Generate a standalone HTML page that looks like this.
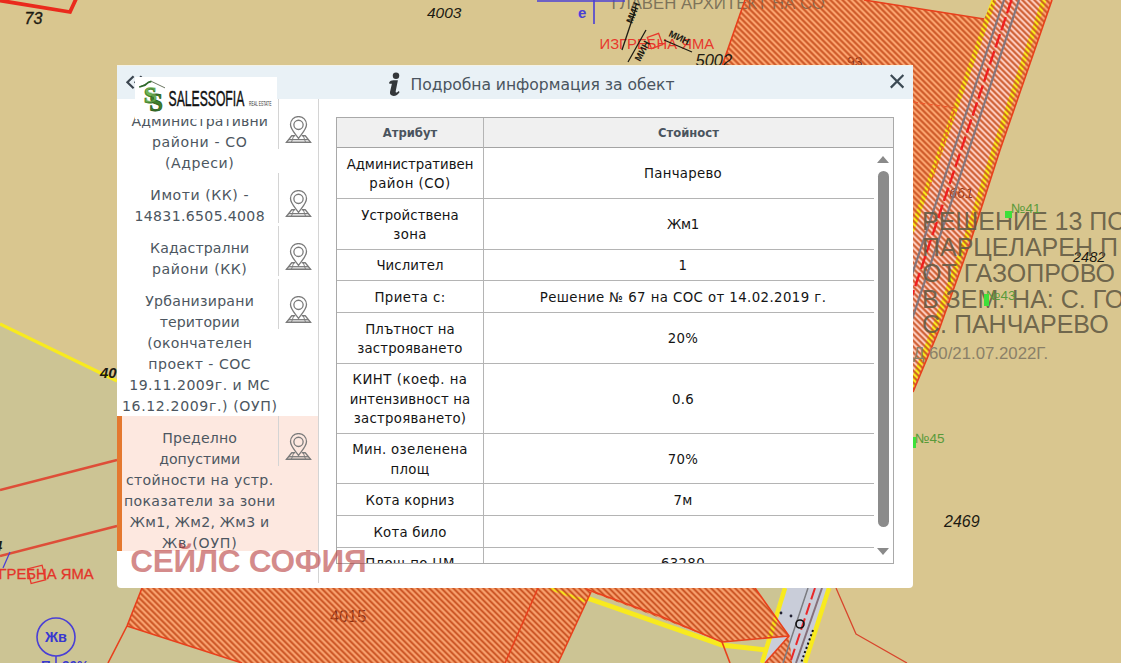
<!DOCTYPE html>
<html lang="bg">
<head>
<meta charset="utf-8">
<title>Подробна информация за обект</title>
<style>
html,body{margin:0;padding:0;}
body{width:1121px;height:663px;overflow:hidden;position:relative;background:#d9c68f;font-family:"DejaVu Sans","Liberation Sans",sans-serif;}
#map{position:absolute;left:0;top:0;width:1121px;height:663px;display:block;}
#dlg{position:absolute;left:117px;top:65px;width:796px;height:523px;background:#fff;border-radius:0 0 4px 4px;overflow:hidden;}
#hdr{position:absolute;left:0;top:0;width:796px;height:34px;background:#e9f1f6;box-sizing:border-box;border-top:1px solid #f4f2e6;}
#title{position:absolute;left:293.5px;top:9px;font-size:15.6px;line-height:22px;color:#4a545e;white-space:nowrap;letter-spacing:-0.05px;}
#info{position:absolute;left:268px;top:4px;}
#back{position:absolute;left:7px;top:9px;}
#close{position:absolute;left:772px;top:8.5px;}
#side{position:absolute;left:0;top:34px;width:201px;height:451.5px;overflow:hidden;}
#sideb{position:absolute;left:201px;top:34px;width:1px;height:484px;background:#d4d4d4;}
.item{position:absolute;left:0;width:201px;box-sizing:border-box;border-left:5px solid transparent;}
.item.active{background:#fde8e0;border-left-color:#e4782f;}
.itxt{position:absolute;left:0;top:12px;width:155.4px;text-align:center;font-size:14.1px;line-height:21px;color:#4c5660;white-space:nowrap;}
.icell{position:absolute;left:156px;top:0;width:40px;height:50px;border-left:1px solid #d4d4d4;}
.pin{position:absolute;left:5.7px;top:17.4px;width:27px;height:27px;}
#logo{position:absolute;left:18px;top:12px;width:142px;height:41.6px;background:#fff;}
#logotxt{position:absolute;left:33.5px;top:10.5px;font-family:"Liberation Sans",sans-serif;font-size:22px;line-height:22px;color:#111;transform-origin:0 0;transform:scaleX(0.535);white-space:nowrap;letter-spacing:0.3px;}
#logosub{position:absolute;left:113.5px;top:22.5px;font-family:"Liberation Sans",sans-serif;font-size:7px;line-height:8px;color:#333;transform-origin:0 0;transform:scaleX(0.62);white-space:nowrap;}
#tbl{position:absolute;left:219px;top:52px;width:556px;height:445px;border:1px solid #a9a9a9;overflow:hidden;background:#fff;}
#th{position:absolute;left:0;top:0;width:556px;height:29px;background:#f0f0f0;border-bottom:1px solid #a4a4a4;}
#th div{position:absolute;top:0;height:29px;line-height:31px;text-align:center;font-weight:bold;font-size:11.6px;color:#4a545e;}
.tr{position:absolute;left:0;width:538px;}
.ta{position:absolute;left:0;top:0;bottom:0;width:146px;display:flex;align-items:center;justify-content:center;text-align:center;}
.tv{position:absolute;left:147px;top:0;bottom:0;width:398px;display:flex;align-items:center;justify-content:center;text-align:center;}
.tr span{font-size:13.3px;line-height:19.6px;color:#141414;white-space:nowrap;position:relative;top:1.1px;}
.tr i{font-style:normal;}
.hl{position:absolute;left:0;width:537px;height:1px;background:#b4b4b4;}
#vl{position:absolute;left:146px;top:0;width:1px;height:445px;background:#b4b4b4;}
#sb{position:absolute;left:538px;top:30px;width:18px;height:415px;background:#fff;}
#thumb{position:absolute;left:3px;top:23px;width:11px;height:356px;border-radius:5.5px;background:#8b8b8b;}
.arr{position:absolute;left:1.6px;width:0;height:0;border-left:6.8px solid transparent;border-right:6.8px solid transparent;}
#wm{position:absolute;left:13.3px;top:478px;font-family:"Liberation Sans",sans-serif;font-weight:bold;font-size:31.6px;line-height:36px;letter-spacing:-0.3px;color:rgba(183,60,60,0.6);white-space:nowrap;}
</style>
</head>
<body>

<svg id="map" width="1121" height="663" viewBox="0 0 1121 663">
<defs>
<linearGradient id="sg" x1="0" y1="0" x2="1" y2="0">
<stop offset="0" stop-color="#c64c1c" stop-opacity="0"/>
<stop offset="0.14" stop-color="#c64c1c" stop-opacity="0"/>
<stop offset="0.36" stop-color="#c64c1c" stop-opacity="0.8"/>
<stop offset="0.5" stop-color="#c64c1c" stop-opacity="0.95"/>
<stop offset="0.64" stop-color="#c64c1c" stop-opacity="0.8"/>
<stop offset="0.86" stop-color="#c64c1c" stop-opacity="0"/>
<stop offset="1" stop-color="#c64c1c" stop-opacity="0"/>
</linearGradient>
<pattern id="stripes" width="4.24" height="4.24" patternUnits="userSpaceOnUse" patternTransform="rotate(-45)">
<rect x="0" y="0" width="4.24" height="4.24" fill="url(#sg)"/>
</pattern>
<clipPath id="zoneA"><polygon points="745,0 864,0 984,19 993,0 1052,0 1000,150 971,240 939,330 913,392 905,415 700,415 722,65"/></clipPath>
<clipPath id="zoneB"><path d="M150,570 L142,588 L127,626 L242,663 L558,663 L591,592 L660,618 L722,642 L789,636 L755,588 L750,570 Z M789,636 L765,663 L792,663 Z"/></clipPath>
</defs>
<rect width="1121" height="663" fill="#d9c68f"/>
<polygon points="0,324 117,381 400,500 783,588 760,663 0,663" fill="#ccc494"/>
<!-- road surfaces -->
<polygon points="783,588 830,588 806,663 760,663" fill="#c9cdd9"/>
<!-- zone fills (orange tint) -->
<g fill="#ff9c68" fill-opacity="0.85">
<polygon points="745,0 864,0 984,19 993,0 1052,0 1000,150 971,240 939,330 913,392 905,415 700,415 722,65"/>
<path d="M150,570 L142,588 L127,626 L242,663 L558,663 L591,592 L660,618 L722,642 L789,636 L755,588 L750,570 Z M789,636 L765,663 L792,663 Z"/>
</g>
<polygon points="994,0 1044,0 994,150 965.5,240 933.5,330 909,392 850,392 905,250" fill="#fcccc0" fill-opacity="0.92"/>
<!-- labels below the hatch -->
<g font-family="Liberation Sans, sans-serif">
<text x="611.5" y="9" font-size="16.8" fill="#6d6450" fill-opacity="0.85">ГЛАВЕН АРХИТЕКТ НА СО</text>
</g>
<!-- yellow lines -->
<g stroke="#f8ea1e" fill="none" stroke-linecap="butt">
<path d="M0,324 L117,381" stroke-width="3.2"/>
<path d="M994,0 L905,250" stroke-width="5"/>
<path d="M1044,0 L994,150 L965.5,240 L933.5,330 L909,392" stroke-width="5"/>
<path d="M587,598 L722,645 L766,650" stroke-width="5"/>
<path d="M785,588 L762,663" stroke-width="4.5"/>
<path d="M829,588 L805,663" stroke-width="4.5"/>
<path d="M549,588 L585,601" stroke-width="3"/>
</g>
<g font-family="Liberation Sans, sans-serif" fill="#74240c" fill-opacity="0.9">
<text x="847" y="67" font-size="14">93</text>
<text x="949" y="197.5" font-size="14.5" font-style="italic">661</text>
<text x="330" y="621.5" font-size="16.3">4015</text>
</g>
<!-- red stripes over zones -->
<rect x="690" y="0" width="370" height="420" fill="url(#stripes)" clip-path="url(#zoneA)"/>
<rect x="120" y="565" width="680" height="98" fill="url(#stripes)" clip-path="url(#zoneB)"/>
<!-- road centre lines -->
<g fill="none">
<path d="M1004,0 L870,400" stroke="#84767c" stroke-width="2.2"/>
<path d="M1019,0 L885,400" stroke="#84767c" stroke-width="2.2"/>
<path d="M1011.5,0 L877,400" stroke="#f02020" stroke-width="2.4" stroke-dasharray="14 4"/>
<path d="M808,588 L783,663" stroke="#7b7b80" stroke-width="1.5"/>
<path d="M822,588 L796,663" stroke="#85707a" stroke-width="2"/>
<path d="M815,588 L790,663" stroke="#e8282a" stroke-width="2" stroke-dasharray="12 4"/>
<path d="M813,630 L801,663" stroke="#111" stroke-width="2" stroke-dasharray="2 2.5"/>
</g>
<!-- red outlines -->
<g stroke="#e8401c" fill="none" stroke-width="1.6" stroke-linejoin="round">
<path d="M745,0 L722,66"/>
<path d="M864,0 L984,19"/>
<path d="M1052,0 L1000,150 L971,240 L939,330 L913,392"/>
<path d="M142,588 L127,626 L108,663"/>
<path d="M127,626 L242,663"/>
<path d="M538,588 L505,663"/>
<path d="M591,592 L558,663"/>
<path d="M586,589 L660,616 L722,642 L789,636 L755,588"/>
<path d="M722,642 L730,663"/>
<path d="M789,636 L765,663"/>
<path d="M836,588 L856,634 L907,663" stroke="#d8452c" stroke-width="1.3"/>
<path d="M913,102 L955,108 L926,198" stroke="#f0582c" stroke-width="1.2" stroke-dasharray="5 2.5"/>
</g>
<!-- plain red lines on the left -->
<g stroke="#de4e38" fill="none" stroke-width="2.4">
<path d="M0,490 L117,460"/>
<path d="M0,556 L117,526"/>
<path d="M0,0.5 L70,12 L76,-1" stroke="#ea2a1c" stroke-width="3.8"/>
</g>
<!-- blue things -->
<g stroke="#4a3fd6" fill="none" stroke-width="1.6">
<path d="M537,1 L625,1"/>
<path d="M594,0 L594,24"/>
<circle cx="56" cy="637" r="19"/>
<path d="M56,656 L56,663"/>
<path d="M10,552 L3,568" stroke-width="1.2"/>
</g>
<!-- labels -->
<g font-family="Liberation Sans, sans-serif">
<text x="24.5" y="24" font-size="16" font-style="italic" fill="#1c1a12" stroke="#1c1a12" stroke-width="0.35">73</text>
<text x="427" y="18" font-size="15.5" font-style="italic" fill="#1c1a12">4003</text>
<text x="695.5" y="65.5" font-size="16.5" font-style="italic" fill="#1c1a12">5002</text>
<text x="100" y="378" font-size="15" font-style="italic" font-weight="bold" fill="#1c1a12">40</text>
<text x="944" y="527" font-size="16" font-style="italic" fill="#1c1a12">2469</text>
<text x="1073" y="262" font-size="14.5" font-style="italic" fill="#1c1a12">2482</text>
<text x="599.5" y="48.5" font-size="14.8" fill="#e8382c">ИЗГРЕБНА ЯМА</text>
<text x="-21" y="578.5" font-size="14.8" fill="#e3342a" stroke="#e3342a" stroke-width="0.3">ИЗГРЕБНА ЯМА</text>
<rect x="-7" y="-7" width="15" height="15" transform="translate(36,574) rotate(-14)" fill="none" stroke="#e8382c" stroke-width="1.3"/>
<rect x="-6" y="-6" width="12" height="12" transform="translate(655,41) rotate(-20)" fill="none" stroke="#e8382c" stroke-width="1.3"/>
<text x="578" y="18" font-size="15" font-weight="bold" fill="#4a3fd6">е</text>
<text x="56" y="642" font-size="14.5" font-weight="bold" fill="#3838d0" text-anchor="middle">Жв</text>
<text x="41" y="669.5" font-size="13.5" font-weight="bold" fill="#3838d0">П</text>
<text x="62" y="669.5" font-size="13.5" font-weight="bold" fill="#3838d0">20%</text>
<text x="-6" y="551" font-size="15" font-style="italic" font-weight="bold" fill="#1c1a12">4</text>
<g fill="#1c1a12" font-size="9.5" font-weight="bold">
<text transform="translate(632,24) rotate(-68)">МИН</text>
<text transform="translate(640,62) rotate(-62)">МИН</text>
<text transform="translate(668,36) rotate(25)">МИН</text>
</g>
<g stroke="#1c1a12" stroke-width="1.3" fill="none">
<path d="M636,8 L622,50"/><path d="M646,30 L628,62"/><path d="M664,40 L692,52"/>
</g>
<g fill="#625a44" fill-opacity="0.9" font-size="25">
<text x="922" y="229.5">РЕШЕНИЕ 13 ПО</text>
<text x="922" y="255.5">ПАРЦЕЛАРЕН П</text>
<text x="922" y="281.5">ОТ ГАЗОПРОВО</text>
<text x="922" y="307.5">В ЗЕМ. НА: С. ГО</text>
<text x="922" y="333">С. ПАНЧАРЕВО</text>
</g>
<text x="913" y="359" font-size="16.8" fill="#8a8068">Д 60/21.07.2022Г.</text>
<g fill="#5a9a3a" font-size="13.5">
<text x="1011" y="213">№41</text>
<text x="986" y="300">№43</text>
<text x="915" y="443">№45</text>
</g>
<rect x="1005" y="211" width="7" height="7" fill="#3ee03a"/>
<rect x="984" y="294" width="5" height="12" fill="#3ee03a"/>
<rect x="913" y="437" width="3" height="11" fill="#3ee03a"/>
<circle cx="800" cy="624" r="4" fill="none" stroke="#111" stroke-width="1.6"/>
<circle cx="781" cy="613" r="1.4" fill="#223"/><circle cx="791" cy="616" r="1.4" fill="#223"/>
</g>
</svg>

<div id="dlg">
<div id="hdr"></div>
<svg id="hicons" style="position:absolute;left:0;top:0" width="796" height="34" viewBox="117 65 796 34">
<g fill="none" stroke="#3c4650" stroke-width="2.2"><path d="M133.6,76.2 L127.4,82.2 L133.6,88.2"/><path d="M141.6,76.2 L135.4,82.2 L141.6,88.2"/></g>
<g fill="#33373a"><circle cx="396" cy="75.8" r="3.25"/>
<path d="M389.1,82.4 C390,81 391.6,80.3 393.4,80.3 L397.9,80.2 L395.7,91.3 C395.5,92.6 396.3,92.9 397.2,92.3 L398.9,91.1 L399.5,92.2 C398,94.4 396,95.9 393.6,95.9 C391,95.9 389.6,94.4 390,92.1 L391.9,83.8 C391,83.5 390.2,83.6 389.6,84 Z"/></g>
<g fill="none" stroke="#3c4a54" stroke-width="2.2"><path d="M890.8,75 L903.4,87.6 M903.4,75 L890.8,87.6"/></g>
</svg>
<div id="title">Подробна информация за обект</div>
<div id="sideb"></div>
<div id="side">
<div class="item" style="top:0px;height:74px"><div class="itxt"><span style="letter-spacing:0.09px">Административни</span><br><span style="letter-spacing:0.62px">райони - СО</span><br><span style="letter-spacing:0.56px">(Адреси)</span></div><div class="icell"><svg class="pin" width="28" height="28" viewBox="0 0 28 28" fill="none" stroke="#7b7b7b" stroke-width="1.35" stroke-linejoin="round">
<path d="M14,0.6 C9.2,0.6 5.7,4.3 5.7,8.9 C5.7,13.8 10.6,18.4 14,23.3 C17.4,18.4 22.3,13.8 22.3,8.9 C22.3,4.3 18.8,0.6 14,0.6 Z"/>
<circle cx="14" cy="9.2" r="4.8"/>
<path d="M10.6,20.5 L7,20.5 L0.8,28.2 L27.2,28.2 L21,20.5 L17.4,20.5"/>
<path d="M3.6,24.6 L24.4,24.6" />
<path d="M1.6,27.3 L26.4,27.3" stroke-width="1.9"/>
<path d="M9,20.6 L6.4,28 M19,20.6 L21.6,28 M14,23.6 L14,24.6" stroke-width="1"/>
</svg></div></div>
<div class="item" style="top:74px;height:53px"><div class="itxt"><span style="letter-spacing:0.54px">Имоти (КК) -</span><br><span style="letter-spacing:0.33px">14831.6505.4008</span></div><div class="icell"><svg class="pin" width="28" height="28" viewBox="0 0 28 28" fill="none" stroke="#7b7b7b" stroke-width="1.35" stroke-linejoin="round">
<path d="M14,0.6 C9.2,0.6 5.7,4.3 5.7,8.9 C5.7,13.8 10.6,18.4 14,23.3 C17.4,18.4 22.3,13.8 22.3,8.9 C22.3,4.3 18.8,0.6 14,0.6 Z"/>
<circle cx="14" cy="9.2" r="4.8"/>
<path d="M10.6,20.5 L7,20.5 L0.8,28.2 L27.2,28.2 L21,20.5 L17.4,20.5"/>
<path d="M3.6,24.6 L24.4,24.6" />
<path d="M1.6,27.3 L26.4,27.3" stroke-width="1.9"/>
<path d="M9,20.6 L6.4,28 M19,20.6 L21.6,28 M14,23.6 L14,24.6" stroke-width="1"/>
</svg></div></div>
<div class="item" style="top:127px;height:53px"><div class="itxt"><span style="letter-spacing:0.11px">Кадастрални</span><br><span style="letter-spacing:0.57px">райони (КК)</span></div><div class="icell"><svg class="pin" width="28" height="28" viewBox="0 0 28 28" fill="none" stroke="#7b7b7b" stroke-width="1.35" stroke-linejoin="round">
<path d="M14,0.6 C9.2,0.6 5.7,4.3 5.7,8.9 C5.7,13.8 10.6,18.4 14,23.3 C17.4,18.4 22.3,13.8 22.3,8.9 C22.3,4.3 18.8,0.6 14,0.6 Z"/>
<circle cx="14" cy="9.2" r="4.8"/>
<path d="M10.6,20.5 L7,20.5 L0.8,28.2 L27.2,28.2 L21,20.5 L17.4,20.5"/>
<path d="M3.6,24.6 L24.4,24.6" />
<path d="M1.6,27.3 L26.4,27.3" stroke-width="1.9"/>
<path d="M9,20.6 L6.4,28 M19,20.6 L21.6,28 M14,23.6 L14,24.6" stroke-width="1"/>
</svg></div></div>
<div class="item" style="top:180px;height:137px"><div class="itxt"><span style="letter-spacing:0.25px">Урбанизирани</span><br><span style="letter-spacing:0.1px">територии</span><br><span style="letter-spacing:0.32px">(окончателен</span><br><span style="letter-spacing:0.49px">проект - СОС</span><br><span style="letter-spacing:0.49px">19.11.2009г. и МС</span><br><span style="letter-spacing:0.62px">16.12.2009г.) (ОУП)</span></div><div class="icell"><svg class="pin" width="28" height="28" viewBox="0 0 28 28" fill="none" stroke="#7b7b7b" stroke-width="1.35" stroke-linejoin="round">
<path d="M14,0.6 C9.2,0.6 5.7,4.3 5.7,8.9 C5.7,13.8 10.6,18.4 14,23.3 C17.4,18.4 22.3,13.8 22.3,8.9 C22.3,4.3 18.8,0.6 14,0.6 Z"/>
<circle cx="14" cy="9.2" r="4.8"/>
<path d="M10.6,20.5 L7,20.5 L0.8,28.2 L27.2,28.2 L21,20.5 L17.4,20.5"/>
<path d="M3.6,24.6 L24.4,24.6" />
<path d="M1.6,27.3 L26.4,27.3" stroke-width="1.9"/>
<path d="M9,20.6 L6.4,28 M19,20.6 L21.6,28 M14,23.6 L14,24.6" stroke-width="1"/>
</svg></div></div>
<div class="item active" style="top:317px;height:135px"><div class="itxt"><span style="letter-spacing:0.16px">Пределно</span><br><span style="letter-spacing:0.02px">допустими</span><br><span style="letter-spacing:0.35px">стойности на устр.</span><br><span style="letter-spacing:0.32px">показатели за зони</span><br><span style="letter-spacing:0.25px">Жм1, Жм2, Жм3 и</span><br><span style="letter-spacing:0.79px">Жв (ОУП)</span></div><div class="icell"><svg class="pin" width="28" height="28" viewBox="0 0 28 28" fill="none" stroke="#7b7b7b" stroke-width="1.35" stroke-linejoin="round">
<path d="M14,0.6 C9.2,0.6 5.7,4.3 5.7,8.9 C5.7,13.8 10.6,18.4 14,23.3 C17.4,18.4 22.3,13.8 22.3,8.9 C22.3,4.3 18.8,0.6 14,0.6 Z"/>
<circle cx="14" cy="9.2" r="4.8"/>
<path d="M10.6,20.5 L7,20.5 L0.8,28.2 L27.2,28.2 L21,20.5 L17.4,20.5"/>
<path d="M3.6,24.6 L24.4,24.6" />
<path d="M1.6,27.3 L26.4,27.3" stroke-width="1.9"/>
<path d="M9,20.6 L6.4,28 M19,20.6 L21.6,28 M14,23.6 L14,24.6" stroke-width="1"/>
</svg></div></div>
</div>
<div id="tbl">
<div id="th"><div style="left:0;width:146px">Атрибут</div><div style="left:147px;width:409px;">Стойност</div></div>
<div style="position:absolute;left:0;top:30px;width:556px;height:415px;overflow:hidden;" id="tbody">
</div>
<div class="tr" style="top:30px;height:50px"><div class="ta"><span><i style="letter-spacing:-0.02px">Административен</i><br><i style="letter-spacing:0.51px">район (СО)</i></span></div><div class="tv"><span><i style="letter-spacing:0.3px">Панчарево</i></span></div></div>
<div class="hl" style="top:80px"></div>
<div class="tr" style="top:81px;height:50px"><div class="ta"><span><i style="letter-spacing:0.11px">Устройствена</i><br><i style="letter-spacing:0.4px">зона</i></span></div><div class="tv"><span><i style="letter-spacing:-0.3px">Жм1</i></span></div></div>
<div class="hl" style="top:131px"></div>
<div class="tr" style="top:132px;height:30px"><div class="ta"><span><i style="letter-spacing:0.06px">Числител</i></span></div><div class="tv"><span><i style="letter-spacing:0.3px">1</i></span></div></div>
<div class="hl" style="top:162px"></div>
<div class="tr" style="top:163px;height:31px"><div class="ta"><span><i style="letter-spacing:0.45px">Приета с:</i></span></div><div class="tv"><span><i style="letter-spacing:0.42px">Решение № 67 на СОС от 14.02.2019 г.</i></span></div></div>
<div class="hl" style="top:194px"></div>
<div class="tr" style="top:195px;height:50px"><div class="ta"><span><i style="letter-spacing:0.09px">Плътност на</i><br><i style="letter-spacing:0.13px">застрояването</i></span></div><div class="tv"><span><i style="letter-spacing:0.3px">20%</i></span></div></div>
<div class="hl" style="top:245px"></div>
<div class="tr" style="top:246px;height:69px"><div class="ta"><span><i style="letter-spacing:0.51px">КИНТ (коеф. на</i><br><i style="letter-spacing:0.15px">интензивност на</i><br><i style="letter-spacing:0.28px">застрояването)</i></span></div><div class="tv"><span><i style="letter-spacing:0.3px">0.6</i></span></div></div>
<div class="hl" style="top:315px"></div>
<div class="tr" style="top:316px;height:49px"><div class="ta"><span><i style="letter-spacing:0.32px">Мин. озеленена</i><br><i style="letter-spacing:0.23px">площ</i></span></div><div class="tv"><span><i style="letter-spacing:0.3px">70%</i></span></div></div>
<div class="hl" style="top:365px"></div>
<div class="tr" style="top:366px;height:31px"><div class="ta"><span><i style="letter-spacing:0.19px">Кота корниз</i></span></div><div class="tv"><span><i style="letter-spacing:0.3px">7м</i></span></div></div>
<div class="hl" style="top:397px"></div>
<div class="tr" style="top:398px;height:31px"><div class="ta"><span><i style="letter-spacing:0.21px">Кота било</i></span></div><div class="tv"><span></span></div></div>
<div class="hl" style="top:429px"></div>
<div class="tr" style="top:430px;height:30px"><div class="ta"><span><i style="letter-spacing:0.32px">Площ по ЦМ</i></span></div><div class="tv"><span><i style="letter-spacing:0.3px">63280</i></span></div></div>
<div class="hl" style="top:460px"></div>
<div id="vl"></div>
<div id="sb"><div class="arr" style="top:8px;border-bottom:7px solid #8a8a8a"></div><div id="thumb"></div><div class="arr" style="top:400px;border-top:7px solid #8a8a8a"></div></div>
</div>
<div id="logo">
<svg style="position:absolute;left:0;top:0" width="142" height="41" viewBox="0 0 142 41"><path d="M4.3,10 L16.4,4.4 L30,10.9" fill="none" stroke="#5a6650" stroke-width="0.9"/><path d="M4.3,10 L10,8.2 L13.5,5.2 L16.4,4.4" fill="none" stroke="#2e6b2a" stroke-width="1.7"/>
<g font-family="Liberation Serif, serif" font-weight="bold">
<text x="8.8" y="25.6" font-size="23.5" fill="#57a03a" stroke="#3b7a2a" stroke-width="0.8">S</text>
<text x="14.2" y="33.8" font-size="24.5" fill="#3f7f2c" stroke="#2c5e20" stroke-width="0.8">S</text>
<text x="9.4" y="25.2" font-size="23.5" fill="#8cc86a" fill-opacity="0.55">S</text>
</g>
<text x="33.6" y="28.7" font-family="Liberation Sans, sans-serif" font-size="22" fill="#111" stroke="#111" stroke-width="0.45" textLength="75.7" lengthAdjust="spacingAndGlyphs">SALESSOFIA</text>
<text x="114" y="28.7" font-family="Liberation Sans, sans-serif" font-size="6.6" fill="#333" textLength="22.4" lengthAdjust="spacingAndGlyphs">REAL ESTATE</text>
</svg>
</div>
<div id="wm">СЕЙЛС СОФИЯ</div>
</div>
</body>
</html>
